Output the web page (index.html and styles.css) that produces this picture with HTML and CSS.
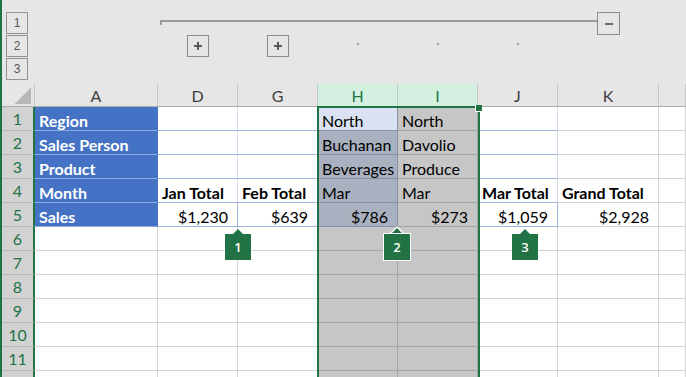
FILE: index.html
```html
<!DOCTYPE html>
<html lang="en">
<head>
    <meta charset="UTF-8">
    <meta name="viewport" content="width=device-width, initial-scale=1.0">
    <title>Sales by month</title>
    <link rel="stylesheet" href="styles.css">
</head>
<body>
    <div class="app">
        <!-- outline / grouping strip -->
        <div class="outline">
            <div class="levels">
                <div class="lvl">1</div>
                <div class="lvl">2</div>
                <div class="lvl">3</div>
            </div>
            <div class="bracket-row">
                <div class="bracket"></div>
                <div class="toggle"><span class="minus"></span></div>
            </div>
            <div class="grp col-d"><div class="plus-box"></div></div>
            <div class="grp col-g"><div class="plus-box"></div></div>
            <div class="grp col-h"><span class="dot"></span></div>
            <div class="grp col-i"><span class="dot"></span></div>
            <div class="grp col-j"><span class="dot"></span></div>
        </div>

        <div class="sheet">
            <div class="corner"></div>
            <div class="hd">A</div>
            <div class="hd">D</div>
            <div class="hd">G</div>
            <div class="hd on">H</div>
            <div class="hd on">I</div>
            <div class="hd">J</div>
            <div class="hd">K</div>
            <div class="hd"></div>

            <div class="rh">1</div>
            <div class="c lab">Region</div>
            <div class="c pv"></div>
            <div class="c pv"></div>
            <div class="c h active">North</div>
            <div class="c i">North</div>
            <div class="c pv"></div>
            <div class="c"></div>
            <div class="c"></div>

            <div class="rh">2</div>
            <div class="c lab">Sales Person</div>
            <div class="c pv"></div>
            <div class="c pv"></div>
            <div class="c h">Buchanan</div>
            <div class="c i">Davolio</div>
            <div class="c pv"></div>
            <div class="c"></div>
            <div class="c"></div>

            <div class="rh">3</div>
            <div class="c lab">Product</div>
            <div class="c pv"></div>
            <div class="c pv"></div>
            <div class="c h">Beverages</div>
            <div class="c i">Produce</div>
            <div class="c pv"></div>
            <div class="c"></div>
            <div class="c"></div>

            <div class="rh">4</div>
            <div class="c lab">Month</div>
            <div class="c pv b">Jan Total</div>
            <div class="c pv b">Feb Total</div>
            <div class="c h">Mar</div>
            <div class="c i">Mar</div>
            <div class="c pv b">Mar Total</div>
            <div class="c b">Grand Total</div>
            <div class="c"></div>

            <div class="rh">5</div>
            <div class="c lab">Sales</div>
            <div class="c pv num">$1,230</div>
            <div class="c pv num">$639</div>
            <div class="c h num">$786</div>
            <div class="c i num">$273</div>
            <div class="c pv num">$1,059</div>
            <div class="c num">$2,928</div>
            <div class="c"></div>

            <div class="rh">6</div>
            <div class="c"></div><div class="c"></div><div class="c"></div>
            <div class="c sel"></div><div class="c sel"></div>
            <div class="c"></div><div class="c"></div><div class="c"></div>

            <div class="rh">7</div>
            <div class="c"></div><div class="c"></div><div class="c"></div>
            <div class="c sel"></div><div class="c sel"></div>
            <div class="c"></div><div class="c"></div><div class="c"></div>

            <div class="rh">8</div>
            <div class="c"></div><div class="c"></div><div class="c"></div>
            <div class="c sel"></div><div class="c sel"></div>
            <div class="c"></div><div class="c"></div><div class="c"></div>

            <div class="rh">9</div>
            <div class="c"></div><div class="c"></div><div class="c"></div>
            <div class="c sel"></div><div class="c sel"></div>
            <div class="c"></div><div class="c"></div><div class="c"></div>

            <div class="rh">10</div>
            <div class="c"></div><div class="c"></div><div class="c"></div>
            <div class="c sel"></div><div class="c sel"></div>
            <div class="c"></div><div class="c"></div><div class="c"></div>

            <div class="rh">11</div>
            <div class="c"></div><div class="c"></div><div class="c"></div>
            <div class="c sel"></div><div class="c sel"></div>
            <div class="c"></div><div class="c"></div><div class="c"></div>

            <div class="rh"></div>
            <div class="c"></div><div class="c"></div><div class="c"></div>
            <div class="c sel"></div><div class="c sel"></div>
            <div class="c"></div><div class="c"></div><div class="c"></div>
        </div>

        <!-- selected columns H:I -->
        <div class="selection"></div>
        <div class="handle"></div>

        <!-- callouts -->
        <div class="badge b1">1</div>
        <div class="badge b2">2</div>
        <div class="badge b3">3</div>
    </div>
</body>
</html>
```

FILE: styles.css
```css
/* Excel-like sheet with grouped columns */
:root {
    --cols: 33px 123px 80px 80px 80px 80px 80px 101px 1fr;
    --green: #217346;
}
body {
    margin: 0;
    background: #fff;
    font-family: Lato, "Liberation Sans", sans-serif;
    overflow: hidden;
}
.app {
    position: relative;
    width: 686px;
    height: 377px;
    border-left: 2px solid var(--green);
    box-sizing: border-box;
    overflow: hidden;
}

/* outline strip */
.outline {
    display: grid;
    grid-template-columns: var(--cols);
    grid-template-rows: 12px 23px 22px 1fr;
    height: 84px;
    background: #e6e6e6;
}
.levels {
    grid-column: 1;
    grid-row: 2 / 5;
    display: flex;
    flex-direction: column;
    gap: 1px;
    padding-left: 4px;
}
.lvl {
    width: 22px;
    height: 22px;
    box-sizing: border-box;
    border: 1px solid #939393;
    display: flex;
    align-items: center;
    justify-content: center;
    font: 12px "Liberation Sans", sans-serif;
    color: #555;
}
.bracket-row {
    grid-column: 3 / 9;
    grid-row: 2;
    display: flex;
    align-items: flex-start;
    padding: 0 39px 0 2px;
}
.bracket {
    flex: 1;
    height: 5px;
    margin-top: 8px;
    box-sizing: border-box;
    border-top: 2px solid #9b9b9b;
    border-left: 2px solid #9b9b9b;
}
.toggle {
    width: 23px;
    height: 23px;
    box-sizing: border-box;
    border: 1px solid #8d8d8d;
    display: flex;
    align-items: center;
    justify-content: center;
}
.minus {
    width: 8px;
    height: 2px;
    background: #6b6b6b;
}
.grp {
    grid-row: 3;
    display: flex;
    justify-content: center;
    align-items: flex-start;
}
.col-d { grid-column: 3; }
.col-g { grid-column: 4; }
.col-h { grid-column: 5; }
.col-i { grid-column: 6; }
.col-j { grid-column: 7; }
.plus-box {
    width: 22px;
    height: 22px;
    box-sizing: border-box;
    border: 1px solid #8d8d8d;
    background:
        linear-gradient(#595959, #595959) center / 8px 2px no-repeat,
        linear-gradient(#595959, #595959) center / 2px 8px no-repeat;
}
.dot {
    width: 2px;
    height: 2px;
    margin-top: 8px;
    background: #9a9a9a;
}

/* grid */
.sheet {
    display: grid;
    grid-template-columns: var(--cols);
    grid-template-rows: 23px;
    grid-auto-rows: 24px;
    font-size: 16px;
}
.corner {
    background: #e6e6e6 linear-gradient(to bottom right, transparent 50%, #b7b7b7 50%) right 3px bottom 2px / 16px 16px no-repeat;
    border-right: 1px solid #c6c6c6;
    border-bottom: 1px solid #ababab;
}
.hd {
    display: flex;
    align-items: center;
    justify-content: center;
    background: #e6e6e6;
    color: #3c3c3c;
    border-right: 1px solid #c6c6c6;
    border-bottom: 1px solid #ababab;
}
.hd.on {
    background: #d3f0e0;
    color: var(--green);
    border-bottom-color: var(--green);
}
.rh {
    display: flex;
    align-items: center;
    justify-content: center;
    background: #d2d2d2;
    color: var(--green);
    border-right: 2px solid var(--green);
    border-bottom: 1px solid #b9b9b9;
}
.c {
    display: flex;
    align-items: flex-end;
    padding: 0 4px;
    line-height: 18px;
    white-space: nowrap;
    overflow: hidden;
    color: #000;
    border-right: 1px solid #d4d4d4;
    border-bottom: 1px solid #d4d4d4;
}
.c.b { font-weight: 700; }
.c.num {
    justify-content: flex-end;
    padding-right: 9px;
}
.c.lab {
    background: #4472c4;
    color: #fff;
    font-weight: 700;
    border-right-color: #4472c4;
    border-bottom-color: #8eaadb;
}
.c.pv {
    border-bottom-color: #9db4dd;
    border-right-color: #cfdaf0;
}
.c.pv.num { border-right-color: #9db4dd; }
.c.h {
    background: #a9b0bf;
    border-bottom-color: #8790a6;
    border-right-color: #8790a6;
}
.c.h.active { background: #d9e1f2; }
.c.i {
    background: #c6c6c6;
    border-bottom-color: #9ea4b3;
    border-right-color: #a6a6a6;
}
.c.sel {
    background: #c6c6c6;
    border-bottom-color: #a6a6a6;
    border-right-color: #a6a6a6;
}

/* selection frame */
.selection {
    position: absolute;
    left: 315px;
    top: 106px;
    width: 163px;
    height: 300px;
    box-sizing: border-box;
    border: 2px solid var(--green);
}
.handle {
    position: absolute;
    left: 473px;
    top: 105px;
    width: 7px;
    height: 7px;
    box-sizing: border-box;
    background: var(--green);
    border-left: 1px solid #fff;
    border-bottom: 1px solid #fff;
}

/* numbered callouts */
.badge {
    position: absolute;
    z-index: 1;
    width: 26px;
    height: 26px;
    box-sizing: border-box;
    display: flex;
    align-items: center;
    justify-content: center;
    background: var(--green);
    color: #fff;
    font: 600 13px "Open Sans", sans-serif;
}
.badge::before {
    content: "";
    position: absolute;
    left: 50%;
    top: -5px;
    width: 10px;
    height: 5px;
    margin-left: -5px;
    background: var(--green);
    clip-path: polygon(50% 0, 100% 100%, 0 100%);
}
.b1 { left: 223px; top: 234px; }
.b3 { left: 510px; top: 234px; }
.b2 {
    left: 381px;
    top: 233px;
    width: 28px;
    height: 28px;
    border: 1px solid #fff;
}
.b2::before { top: -6px; }
.b2::after {
    content: "";
    position: absolute;
    z-index: -1;
    left: 50%;
    top: -8px;
    width: 14px;
    height: 7px;
    margin-left: -7px;
    background: #fff;
    clip-path: polygon(50% 0, 100% 100%, 0 100%);
}
```
